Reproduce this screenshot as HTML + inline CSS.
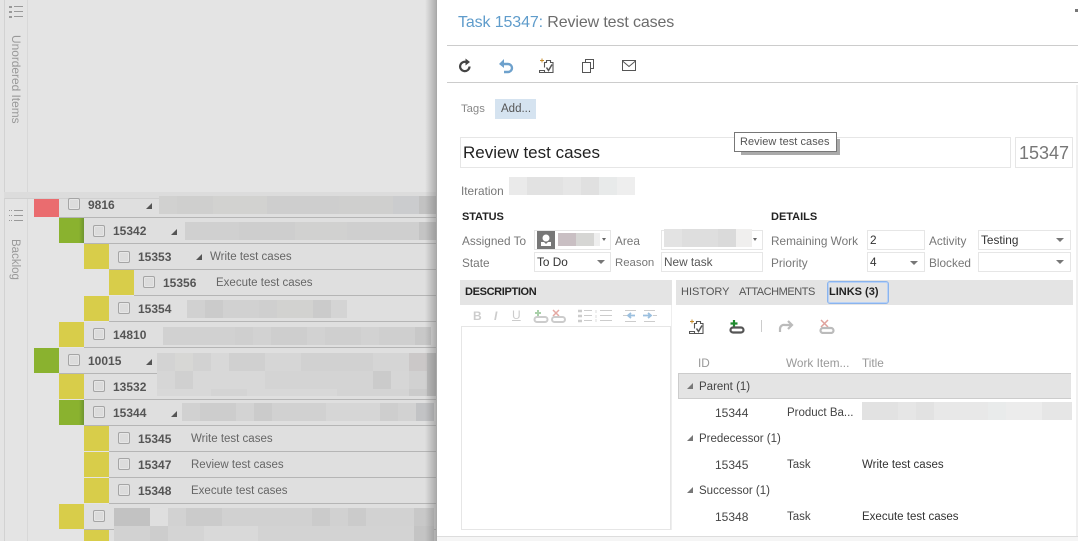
<!DOCTYPE html>
<html><head><meta charset="utf-8"><style>
html,body{margin:0;padding:0}
body{width:1078px;height:541px;overflow:hidden;position:relative;background:#e4e4e4;font:11.5px "Liberation Sans",sans-serif;color:#555}
div,span.a,svg{position:absolute}
.t{white-space:nowrap;line-height:16px}
.r{left:0;right:0;height:25px;background:#dfdfdf;border-bottom:1px solid #b5b5b5}
.c{width:10px;height:10px;border:1px solid #a5a5a5;border-radius:2px;background:#dcdcdc;box-shadow:inset 0 0 0 1px #e6e6e6}
.b{font-weight:bold;color:#555;font-size:12px}
.l{color:#777;font-size:11.8px}
.f{border:1px solid #e6e6e6;background:#fff;box-sizing:border-box;height:20px;line-height:18px;padding-left:2px;color:#333;white-space:nowrap;font-size:11.8px}
.ar{width:0;height:0;border-left:4px solid transparent;border-right:4px solid transparent;border-top:4px solid #777}
.tri{width:0;height:0;border-left:6px solid transparent;border-bottom:6px solid #555}
.tr2{width:0;height:0;border-left:6px solid transparent;border-bottom:6px solid #777}
</style></head><body>
<!-- left rails -->
<div style="left:4px;top:0;width:1px;height:541px;background:#d2d2d2"></div>
<div style="left:27px;top:0;width:1px;height:541px;background:#d8d8d8"></div>
<div style="left:4px;top:192px;width:433px;height:6px;background:#dcdcdc"></div>
<div style="left:5px;top:198px;width:432px;height:1px;background:#d0d0d0"></div>
<svg style="left:9px;top:3px" width="15" height="16" stroke="#999" fill="#999"><rect x="0" y="3" width="3" height="2" stroke="none"/><rect x="0" y="8" width="3" height="2" stroke="none"/><rect x="0" y="13" width="3" height="2" stroke="none"/><path d="M5 3.5h9M5 8.500h9M5 13.500h9" fill="none"/></svg>
<svg style="left:9px;top:209px" width="15" height="14" stroke="#999" fill="#999"><path d="M5 1.500h9M5 6.500h9M5 11.500h9" fill="none"/><path d="M0 1.500h3M0 6.500h3M0 11.500h3" stroke-dasharray="1 1" fill="none"/></svg>
<div class="t" style="left:8px;top:35px;color:#999;writing-mode:vertical-rl;font-size:11.9px;line-height:16px;">Unordered Items</div>
<div class="t" style="left:7px;top:239px;color:#999;writing-mode:vertical-rl;font-size:11.5px;line-height:16px;">Backlog</div>

<!-- backlog rows -->
<div style="left:34px;top:199px;width:403px;height:342px;overflow:hidden">
<div class="r" style="left:25px;top:-7px"></div>
<div class="r" style="left:50px;top:19px"></div>
<div class="r" style="left:75px;top:45px"></div>
<div class="r" style="left:100px;top:71px"></div>
<div class="r" style="left:75px;top:97px"></div>
<div class="r" style="left:50px;top:123px"></div>
<div class="r" style="left:25px;top:149px"></div>
<div class="r" style="left:50px;top:175px"></div>
<div class="r" style="left:50px;top:201px"></div>
<div class="r" style="left:75px;top:227px"></div>
<div class="r" style="left:75px;top:253px"></div>
<div class="r" style="left:75px;top:279px"></div>
<div class="r" style="left:50px;top:305px"></div>
<div class="r" style="left:75px;top:331px"></div>
<div style="left:0;top:0;width:25px;height:18px;background:#ea6c6f"></div>
<div style="left:25px;top:19px;width:25px;height:25px;background:linear-gradient(90deg,#8ab22f 80%,#6f9630)"></div>
<div style="left:50px;top:45px;width:25px;height:25px;background:#d8cd4a"></div>
<div style="left:75px;top:71px;width:25px;height:25px;background:#d8cd4a"></div>
<div style="left:50px;top:97px;width:25px;height:25px;background:#d8cd4a"></div>
<div style="left:25px;top:123px;width:25px;height:25px;background:#d8cd4a"></div>
<div style="left:0;top:149px;width:25px;height:25px;background:#8ab22f"></div>
<div style="left:25px;top:175px;width:25px;height:25px;background:#d8cd4a"></div>
<div style="left:25px;top:201px;width:25px;height:25px;background:linear-gradient(90deg,#8ab22f 80%,#6f9630)"></div>
<div style="left:50px;top:227px;width:25px;height:25px;background:#d8cd4a"></div>
<div style="left:50px;top:253px;width:25px;height:25px;background:#d8cd4a"></div>
<div style="left:50px;top:279px;width:25px;height:25px;background:#d8cd4a"></div>
<div style="left:25px;top:305px;width:25px;height:25px;background:#d8cd4a"></div>
<div style="left:50px;top:331px;width:25px;height:25px;background:#d8cd4a"></div>
</div>
<div class="c" style="left:68px;top:198px"></div><div class="t b" style="left:88px;top:197px">9816</div><div class="tri" style="left:146px;top:203px"></div>
<div class="c" style="left:93px;top:225px"></div><div class="t b" style="left:113px;top:223px">15342</div><div class="tri" style="left:171px;top:229px"></div>
<div class="c" style="left:118px;top:251px"></div><div class="t b" style="left:138px;top:249px">15353</div><div class="tri" style="left:196px;top:254px"></div><div class="t" style="left:210px;top:249px;color:#666">Write test cases</div>
<div class="c" style="left:143px;top:276px"></div><div class="t b" style="left:163px;top:275px">15356</div><div class="t" style="left:216px;top:275px;color:#666">Execute test cases</div>
<div class="c" style="left:118px;top:302px"></div><div class="t b" style="left:138px;top:301px">15354</div>
<div class="c" style="left:93px;top:328px"></div><div class="t b" style="left:113px;top:327px">14810</div>
<div class="c" style="left:68px;top:354px"></div><div class="t b" style="left:88px;top:353px">10015</div><div class="tri" style="left:146px;top:359px"></div>
<div class="c" style="left:93px;top:380px"></div><div class="t b" style="left:113px;top:379px">13532</div>
<div class="c" style="left:93px;top:406px"></div><div class="t b" style="left:113px;top:405px">15344</div><div class="tri" style="left:171px;top:411px"></div>
<div class="c" style="left:118px;top:432px"></div><div class="t b" style="left:138px;top:431px">15345</div><div class="t" style="left:191px;top:431px;color:#666">Write test cases</div>
<div class="c" style="left:118px;top:458px"></div><div class="t b" style="left:138px;top:457px">15347</div><div class="t" style="left:191px;top:457px;color:#666">Review test cases</div>
<div class="c" style="left:118px;top:484px"></div><div class="t b" style="left:138px;top:483px">15348</div><div class="t" style="left:191px;top:483px;color:#666">Execute test cases</div>
<div class="c" style="left:93px;top:510px"></div>

<!-- blurred blocks -->
<div style="left:159px;top:196px;width:277px;height:18px;background:linear-gradient(90deg,#d1d1d0 0 18px,#cfcfce 18px 54px,#d2d2d0 54px 108px,#cecece 108px 180px,#cfcfce 180px 234px,#cbccce 234px 260px,#c2c2c2 260px)"></div>
<div style="left:185px;top:222px;width:251px;height:18px;background:linear-gradient(90deg,#d0d0d0 0 54px,#cecece 54px 110px,#d1d1d0 110px 162px,#cfcfcf 162px 234px,#c4c4c4 234px)"></div>
<div style="left:187px;top:300px;width:160px;height:18px;background:linear-gradient(90deg,#d1d1d1 0 18px,#cbcbcb 18px 36px,#d1d1d1 36px 72px,#cfcfcf 72px 90px,#d2d2d0 90px 126px,#cbcbcb 126px 144px,#d4d4d4 144px)"></div>
<div style="left:163px;top:327px;width:268px;height:18px;background:linear-gradient(90deg,#d1d1d1 0 72px,#cfcfcf 72px 90px,#d2d2d2 90px 108px,#cecece 108px 144px,#d2d2d2 144px 162px,#cfcfcf 162px 198px,#d2d2d2 198px 216px,#cfcfcf 216px 252px,#c8c8c8 252px)"></div>
<div style="left:157px;top:353px;width:281px;height:18px;background:linear-gradient(90deg,#d3d3d3 0 18px,#d7d7d5 18px 36px,#d2d2d2 36px 54px,#d8d8d8 54px 72px,#d0d0d0 72px 108px,#d6d6d6 108px 144px,#d1d1d1 144px 216px,#d5d5d5 216px 252px,#cbc8c8 252px 270px,#bcbcbc 270px)"></div>
<div style="left:157px;top:371px;width:281px;height:18px;background:linear-gradient(90deg,#d6d6d6 0 18px,#d0d0d0 18px 36px,#d8d8d8 36px 108px,#d4d4d4 108px 216px,#cbcbcb 216px 234px,#d6d6d6 234px 252px,#d1d1d1 252px 270px,#bcbcbc 270px)"></div>
<div style="left:157px;top:389px;width:281px;height:7px;background:linear-gradient(90deg,#d8d8d8 0 54px,#d4d4d4 54px 90px,#d8d8d8 90px 180px,#d4d4d4 180px 252px,#cbcbcb 252px 270px,#bcbcbc 270px)"></div>
<div style="left:182px;top:403px;width:263px;height:18px;background:linear-gradient(90deg,#d1d1d1 0 18px,#cdcdcd 18px 54px,#d3d3d3 54px 72px,#cbcbcb 72px 90px,#d1d1d1 90px 144px,#d6d6d6 144px 198px,#cecece 198px 216px,#d2d2d2 216px 234px,#c2c3c5 234px 252px,#e3e3e3 252px)"></div>
<div style="left:114px;top:508px;width:320px;height:18px;background:linear-gradient(90deg,#c2c2c2 0 36px,#dfdfdf 36px 54px,#d2d2d2 54px 72px,#cbcbcb 72px 108px,#d1d1d1 108px 198px,#cbcbcb 198px 216px,#d1d1d1 216px 234px,#cbcbcb 234px 252px,#d2d2d2 252px 300px,#c8c8c8 300px)"></div>
<div style="left:114px;top:526px;width:320px;height:15px;background:linear-gradient(90deg,#d2d2d2 0 36px,#cdcdcd 36px 54px,#d4d4d4 54px 90px,#d9d9d9 90px 144px,#d3d3d3 144px 300px,#c4c4c4 300px)"></div>
<div style="left:425px;top:0;width:12px;height:541px;background:linear-gradient(90deg,rgba(120,120,120,0),rgba(120,120,120,.55))"></div>

<!-- panel -->
<div style="left:436px;top:0;width:642px;height:541px;background:#fff;border-left:1px solid #a8a8a8;box-sizing:border-box"></div>
<div class="t" style="left:458px;top:13px;font-size:16px;letter-spacing:-.12px;line-height:20px;color:#6c6c6c"><span style="color:#5f9ccb">Task 15347:</span> Review test cases</div>
<div style="left:1075px;top:9px;width:3px;height:3px;background:#777"></div>
<div style="left:447px;top:45px;width:631px;height:1px;background:#ccc"></div>
<div style="left:447px;top:82px;width:631px;height:1px;background:#ccc"></div>
<div style="left:1076px;top:85px;width:2px;height:451px;background:#f0f0f0"></div>

<svg style="left:458px;top:58px" width="14" height="16"><path d="M11.500 8.500a4.700 4.700 0 1 1-2.500-4.200" fill="none" stroke="#444" stroke-width="2.200"/><path d="M7.500 0.500v7l4.500-3.500z" fill="#444"/></svg>
<svg style="left:498px;top:58px" width="16" height="16"><path d="M4 6h6a3.500 3.500 0 0 1 0 8H6" fill="none" stroke="#6ea1cc" stroke-width="2.400"/><path d="M1 6l5-5v9z" fill="#6ea1cc"/></svg>
<svg style="left:539px;top:58px" width="16" height="16" fill="none" stroke="#555"><path d="M5.500 9.500V4.500H7.500V2.500h4v2h2.500V14.500H6" stroke-width="1.100"/><path d="M7.500 9.500l2 3 3.500-6" stroke-width="1.500"/><path d="M0.500 12.500h5v2h-5z" stroke-width="1.100"/><path d="M3 0.500v4M1 2.500h4" stroke="#c48a2a"/></svg>
<svg style="left:581px;top:59px" width="14" height="14" fill="#fff" stroke="#555"><path d="M4.500 3.500V0.500H12.500V9.500H9.500"/><path d="M1.500 3.500H9.500V13.500H1.500z"/></svg>
<svg style="left:622px;top:60px" width="14" height="11" fill="none" stroke="#555"><path d="M0.500 0.500h13v10h-13zM0.500 1l6.500 5.500L13.500 1"/></svg>

<div class="t l" style="left:461px;top:101px;color:#888;font-size:11.3px">Tags</div>
<div style="left:495px;top:99px;width:41px;height:20px;background:#d5e3f0"></div>
<div class="t" style="left:501px;top:101px;color:#555">Add...</div>

<div style="left:460px;top:137px;width:551px;height:31px;border:1px solid #e6e6e6;box-sizing:border-box"></div>
<div class="t" style="left:463px;top:143px;font-size:17px;line-height:20px;color:#222">Review test cases</div>
<div style="left:1015px;top:137px;width:58px;height:31px;border:1px solid #e6e6e6;box-sizing:border-box"></div>
<div class="t" style="left:1019px;top:143px;font-size:18px;line-height:20px;color:#777">15347</div>
<div style="left:741px;top:139px;width:99px;height:16px;background:#aaa"></div>
<div style="left:734px;top:132px;width:103px;height:20px;border:1px solid #777;box-sizing:border-box;background:#fff"></div>
<div class="t" style="left:740px;top:134px;font-size:11px;color:#555;letter-spacing:.05px">Review test cases</div>

<div class="t l" style="left:461px;top:183px">Iteration</div>
<div style="left:509px;top:177px;width:126px;height:18px;background:linear-gradient(90deg,#eaeaea 0 18px,#e2e2e2 18px 54px,#e6e6e6 54px 72px,#e0e0e0 72px 90px,#e8eaea 90px 108px,#eeeeee 108px)"></div>

<div class="t" style="left:462px;top:209px;font-weight:bold;font-size:11px;letter-spacing:-.1px;color:#222">STATUS</div>
<div class="t" style="left:771px;top:209px;font-weight:bold;font-size:11px;color:#222">DETAILS</div>

<div class="t l" style="left:462px;top:233px">Assigned To</div>
<div class="t l" style="left:462px;top:255px">State</div>
<div class="t l" style="left:615px;top:233px">Area</div>
<div class="t l" style="left:615px;top:255px;font-size:11.4px">Reason</div>
<div class="t l" style="left:771px;top:233px">Remaining Work</div>
<div class="t l" style="left:771px;top:255px">Priority</div>
<div class="t l" style="left:929px;top:233px">Activity</div>
<div class="t l" style="left:929px;top:255px">Blocked</div>

<div class="f" style="left:534px;top:230px;width:77px"></div>
<div style="left:537px;top:231px;width:18px;height:18px;background:#777"></div>
<svg style="left:537px;top:231px" width="18" height="18" fill="#fff"><circle cx="9" cy="7" r="3.500"/><path d="M4 11h3l2 2 2-2h3v4H4z"/></svg>
<div style="left:558px;top:233px;width:42px;height:13px;background:linear-gradient(90deg,#c9bfc3 0 18px,#d6d6d4 18px 36px,#eeeeee 36px)"></div>
<div class="f" style="left:661px;top:230px;width:102px"></div>
<div style="left:664px;top:229px;width:88px;height:18px;background:linear-gradient(90deg,#e3e3e3 0 18px,#dedede 18px 54px,#dadada 54px 72px,#f0efee 72px)"></div>
<div class="f" style="left:534px;top:252px;width:77px">To Do</div>
<div class="f" style="left:661px;top:252px;width:102px;color:#555">New task</div>
<div class="f" style="left:867px;top:230px;width:58px">2</div>
<div class="f" style="left:867px;top:252px;width:58px">4</div>
<div class="f" style="left:978px;top:230px;width:93px">Testing</div>
<div class="f" style="left:978px;top:252px;width:93px"></div>
<div style="left:602px;top:238px;border-left:2px solid transparent;border-right:2px solid transparent;border-top:3px solid #666"></div>
<div style="left:753px;top:238px;border-left:2px solid transparent;border-right:2px solid transparent;border-top:3px solid #666"></div>
<div class="ar" style="left:597px;top:260px"></div>
<div class="ar" style="left:910px;top:261px"></div>
<div class="ar" style="left:1056px;top:238px"></div>
<div class="ar" style="left:1056px;top:260px"></div>

<div style="left:460px;top:280px;width:212px;height:25px;background:#e4e4e4"></div>
<div class="t" style="left:465px;top:284px;font-weight:bold;font-size:11px;letter-spacing:-.35px;color:#222">DESCRIPTION</div>
<div style="left:676px;top:280px;width:397px;height:25px;background:#e4e4e4"></div>
<div class="t" style="left:681px;top:284px;font-size:11px;color:#555">HISTORY</div>
<div class="t" style="left:739px;top:284px;font-size:11px;letter-spacing:-.45px;color:#555">ATTACHMENTS</div>
<div style="left:827px;top:281px;width:62px;height:23px;border:1px solid #8ab4ee;border-radius:3px;box-shadow:inset 0 0 0 1px #b8d1f5;box-sizing:border-box"></div>
<div class="t" style="left:829px;top:284px;font-weight:bold;font-size:11px;color:#222">LINKS (3)</div>

<!-- description toolbar -->
<div class="t" style="left:473px;top:308px;font-weight:bold;font-size:12px;color:#ccc">B</div>
<div class="t" style="left:494px;top:308px;font-style:italic;font-weight:bold;font-size:12px;color:#ccc">I</div>
<div class="t" style="left:512px;top:307px;font-size:12px;color:#ccc;text-decoration:underline">U</div>
<svg style="left:533px;top:309px" width="48" height="14" fill="none" stroke="#ccc"><path d="M5 1v6M2 4h6" stroke="#a9d0a9" stroke-width="2"/><rect x="1.500" y="8" width="13" height="5" rx="2.500" stroke-width="2"/><path d="M20 1l6 6M26 1l-6 6" stroke="#e5a9a3" stroke-width="1.500"/><rect x="19" y="8" width="13" height="5" rx="2.500" stroke-width="2"/></svg>
<svg style="left:578px;top:309px" width="36" height="14" stroke="#ccc" fill="none"><path d="M0 2h4M0 7h4M0 12h4" stroke-width="2.500"/><path d="M6 1.500h8M6 6.500h8M6 11.500h8M22 1.500h12M22 6.500h12M22 11.500h12"/><path d="M18 1v3M18 6v3M18 10v3" stroke="#ddd"/></svg>
<svg style="left:623px;top:309px" width="36" height="14" fill="none" stroke="#ccc"><path d="M2 1.500h11M0 6.500h4M2 12.500h11M21 1.500h11M30 6.500h4M21 12.500h11"/><path d="M12 6.500H6M8 4L5 6.500 8 9M20 6.500h7M25 4l3 2.500L25 9" stroke="#9cc0df" stroke-width="1.800"/></svg>
<div style="left:461px;top:326px;width:210px;height:204px;border:1px solid #e6e6e6;box-sizing:border-box"></div>
<div style="left:671px;top:305px;width:1px;height:225px;background:#eee"></div>

<!-- links toolbar -->
<svg style="left:689px;top:319px" width="16" height="16" fill="none" stroke="#555"><path d="M5.500 9.500V4.500H7.500V2.500h4v2h2.500V14.500H6" stroke-width="1.100"/><path d="M7.500 9.500l2 3 3.500-6" stroke-width="1.500"/><path d="M0.500 12.500h5v2h-5z" stroke-width="1.100"/><path d="M3 0.500v4M1 2.500h4" stroke="#c48a2a"/></svg>
<svg style="left:729px;top:320px" width="16" height="14" fill="none"><path d="M5 0v7M1.500 3.500h7" stroke="#1f8a2e" stroke-width="2.200"/><rect x="1.500" y="7.500" width="13" height="5" rx="2.500" stroke="#555" stroke-width="2.200"/></svg>
<div style="left:761px;top:320px;width:1px;height:12px;background:#ccc"></div>
<svg style="left:778px;top:320px" width="16" height="13" fill="none" stroke="#bbb" stroke-width="2.200"><path d="M13 5H7a4 4 0 0 0-5 4v3"/><path d="M10 1l4 4-4 4"/></svg>
<svg style="left:819px;top:319px" width="16" height="15" fill="none"><path d="M2 1l7 7M9 1L2 8" stroke="#e0a29c" stroke-width="1.500"/><rect x="1.500" y="9" width="13" height="5" rx="2.500" stroke="#bbb" stroke-width="2.200"/></svg>

<div class="t" style="left:698px;top:355px;color:#999;font-size:11.8px">ID</div>
<div class="t" style="left:786px;top:355px;color:#999;font-size:11.8px">Work Item...</div>
<div class="t" style="left:862px;top:355px;color:#999;font-size:11.8px">Title</div>

<div style="left:678px;top:373px;width:393px;height:26px;background:#e4e4e4;border-left:1px solid #ccc;border-top:1px solid #ccc;border-bottom:1px solid #ccc;box-sizing:border-box"></div>
<div class="tr2" style="left:687px;top:383px"></div>
<div class="t" style="left:699px;top:379px;color:#444">Parent (1)</div>
<div class="t" style="left:715px;top:405px;color:#444;font-size:12px">15344</div>
<div class="t" style="left:787px;top:405px;color:#444">Product Ba...</div>
<div style="left:862px;top:402px;width:210px;height:18px;background:linear-gradient(90deg,#e2e2e2 0 36px,#e6e6e6 36px 54px,#e2e2e2 54px 72px,#e8e8e8 72px 126px,#e9ebeb 126px 144px,#ececec 144px 180px,#e6e6e6 180px)"></div>
<div class="tr2" style="left:687px;top:435px"></div>
<div class="t" style="left:699px;top:431px;color:#444">Predecessor (1)</div>
<div class="t" style="left:715px;top:457px;color:#444;font-size:12px">15345</div>
<div class="t" style="left:787px;top:457px;color:#444">Task</div>
<div class="t" style="left:862px;top:457px;color:#333">Write test cases</div>
<div class="tr2" style="left:687px;top:487px"></div>
<div class="t" style="left:699px;top:483px;color:#444">Successor (1)</div>
<div class="t" style="left:715px;top:509px;color:#444;font-size:12px">15348</div>
<div class="t" style="left:787px;top:509px;color:#444">Task</div>
<div class="t" style="left:862px;top:509px;color:#333">Execute test cases</div>

<div style="left:437px;top:536px;width:641px;height:5px;background:#f5f5f5;border-top:1px solid #ddd;box-sizing:border-box"></div>
</body></html>
